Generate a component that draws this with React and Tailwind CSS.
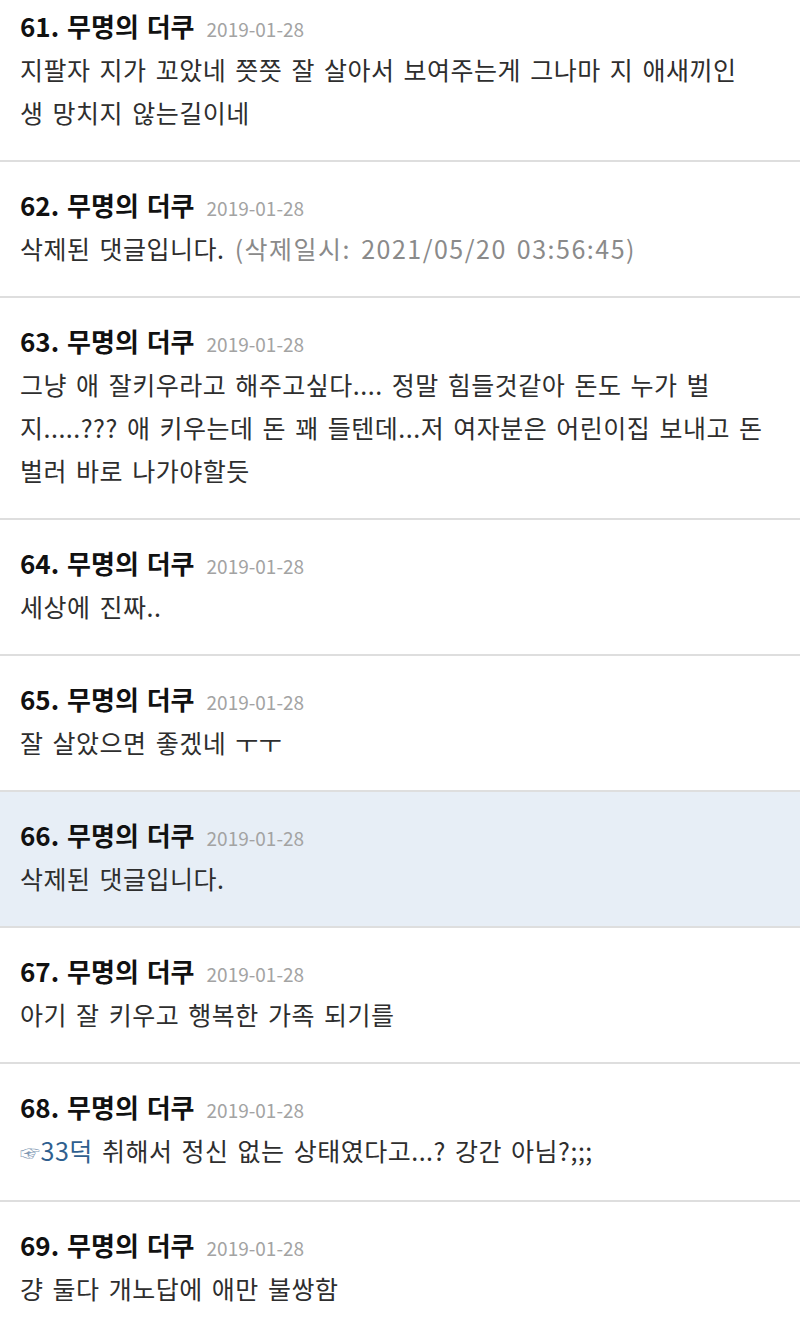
import React from 'react';

const comments = [
  {
    no: 61,
    lines: ['지팔자 지가 꼬았네 쯧쯧 잘 살아서 보여주는게 그나마 지 애새끼인', '생 망치지 않는길이네'],
  },
  {
    no: 62,
    deleted: true,
    deletedAt: '(삭제일시: 2021/05/20 03:56:45)',
  },
  {
    no: 63,
    lines: [
      '그냥 애 잘키우라고 해주고싶다.... 정말 힘들것같아 돈도 누가 벌',
      '지.....??? 애 키우는데 돈 꽤 들텐데...저 여자분은 어린이집 보내고 돈',
      '벌러 바로 나가야할듯',
    ],
  },
  { no: 64, lines: ['세상에 진짜..'] },
  { no: 65, lines: ['잘 살았으면 좋겠네 ㅜㅜ'] },
  { no: 66, deleted: true, highlight: true },
  { no: 67, lines: ['아기 잘 키우고 행복한 가족 되기를'] },
  { no: 68, reply: '33덕', lines: ['취해서 정신 없는 상태였다고...? 강간 아님?;;;'] },
  { no: 69, lines: ['걍 둘다 개노답에 애만 불쌍함'] },
];

function Comment({ c }) {
  return (
    <div
      className={`px-5 pt-[21px] pb-[26px] border-b-2 border-[#dedede] ${
        c.highlight ? 'bg-[#e7eef6]' : 'bg-white'
      }`}
    >
      <div className="h-[44px] flex items-baseline gap-3 leading-[44px]">
        <span className="text-[26px] font-bold text-[#111] [word-spacing:2px]">{c.no}. 무명의 더쿠</span>
        <span className="text-[19px] text-[#a3a3a3]">2019-01-28</span>
      </div>
      <div className="text-[25px] leading-[43px] text-[#2e2e2e] tracking-[0.5px] [word-spacing:3px]">
        {c.deleted && (
          <div className="whitespace-nowrap">
            삭제된 댓글입니다.
            {c.deletedAt && <span className="text-[#8a8a8a] tracking-[1.5px]"> {c.deletedAt}</span>}
          </div>
        )}
        {c.lines &&
          c.lines.map((line, i) => (
            <div key={i} className="whitespace-nowrap">
              {i === 0 && c.reply && (
                <>
                  <span className="text-[20px] text-[#7f98b3]">☞</span>
                  <span className="text-[#2f5f8f]">{c.reply}</span>{' '}
                </>
              )}
              {line}
            </div>
          ))}
      </div>
    </div>
  );
}

export default function App() {
  return (
    <div
      className="w-[800px] h-[1326px] overflow-hidden bg-white"
      style={{ fontFamily: '"Noto Sans CJK KR", "Noto Sans", sans-serif' }}
    >
      <div className="-mt-[17px]">
        {comments.map((c) => (
          <Comment key={c.no} c={c} />
        ))}
      </div>
    </div>
  );
}
